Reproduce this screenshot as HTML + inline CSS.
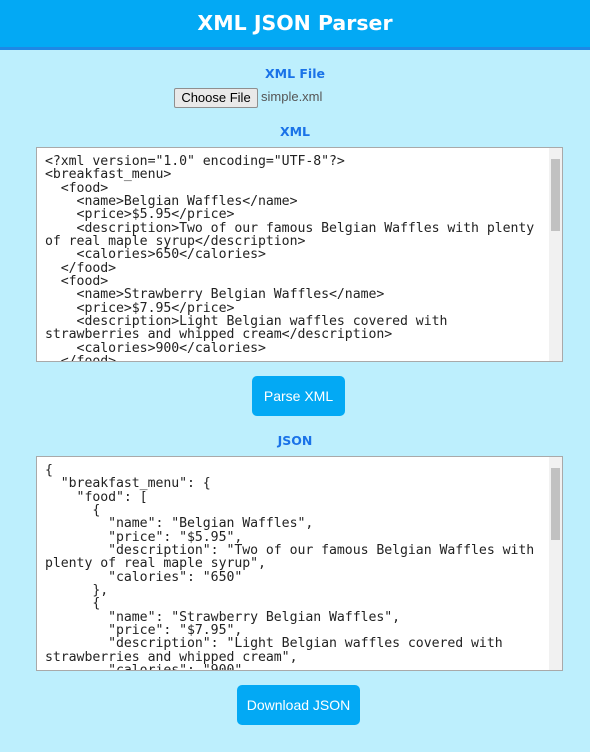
<!DOCTYPE html>
<html><head><style>
body{margin:0;background:#bdeffd;font-family:"Liberation Sans",sans-serif;width:590px;height:752px;overflow:hidden;position:relative}
.hdr{position:absolute;left:0;top:0;width:590px;height:47px;background:#03a9f4;border-bottom:3px solid #1e88e5;color:#fff;font-family:"DejaVu Sans",sans-serif;font-weight:bold;font-size:20.5px;text-align:center;line-height:46px}
.h{position:absolute;left:0;width:590px;text-align:center;color:#1a73e8;font-family:"DejaVu Sans",sans-serif;font-weight:bold;font-size:12.5px}
.ta{position:absolute;left:36px;width:525px;height:213px;background:#fff;border:1px solid #a9a9a9;overflow:hidden}
.ta pre{margin:0;position:absolute;left:8px;top:7px;font-family:"DejaVu Sans Mono",monospace;font-size:13.2px;line-height:13.35px;color:#222;letter-spacing:-0.05px}
.sb{position:absolute;right:0;top:0;width:13px;height:213px;background:#f1f1f1}
.th{position:absolute;left:2px;top:11px;width:9px;height:72px;background:#c1c1c1}
.btn{position:absolute;background:#03a9f4;color:#fff;font-size:14px;text-align:center;line-height:40px;height:40px;border-radius:5px}
</style></head><body>
<div class="hdr">XML JSON Parser</div>
<div class="h" style="top:66px">XML File</div>
<div style="position:absolute;left:174px;top:88px;width:82px;height:18px;border:1px solid #8f8f8f;background:#e9e9e9;border-radius:2px;font-size:13px;line-height:18px;text-align:center;color:#000">Choose File</div>
<div style="position:absolute;left:261px;top:89px;font-size:13px;color:#555">simple.xml</div>
<div class="h" style="top:124px">XML</div>
<div class="ta" style="top:147px"><pre>&lt;?xml version="1.0" encoding="UTF-8"?&gt;
&lt;breakfast_menu&gt;
  &lt;food&gt;
    &lt;name&gt;Belgian Waffles&lt;/name&gt;
    &lt;price&gt;$5.95&lt;/price&gt;
    &lt;description&gt;Two of our famous Belgian Waffles with plenty
of real maple syrup&lt;/description&gt;
    &lt;calories&gt;650&lt;/calories&gt;
  &lt;/food&gt;
  &lt;food&gt;
    &lt;name&gt;Strawberry Belgian Waffles&lt;/name&gt;
    &lt;price&gt;$7.95&lt;/price&gt;
    &lt;description&gt;Light Belgian waffles covered with
strawberries and whipped cream&lt;/description&gt;
    &lt;calories&gt;900&lt;/calories&gt;
  &lt;/food&gt;</pre><div class="sb"><div class="th"></div></div></div>
<div class="btn" style="left:252px;top:376px;width:93px">Parse XML</div>
<div class="h" style="top:433px">JSON</div>
<div class="ta" style="top:456px"><pre>{
  "breakfast_menu": {
    "food": [
      {
        "name": "Belgian Waffles",
        "price": "$5.95",
        "description": "Two of our famous Belgian Waffles with
plenty of real maple syrup",
        "calories": "650"
      },
      {
        "name": "Strawberry Belgian Waffles",
        "price": "$7.95",
        "description": "Light Belgian waffles covered with
strawberries and whipped cream",
        "calories": "900"</pre><div class="sb"><div class="th"></div></div></div>
<div class="btn" style="left:237px;top:685px;width:123px">Download JSON</div>
</body></html>
